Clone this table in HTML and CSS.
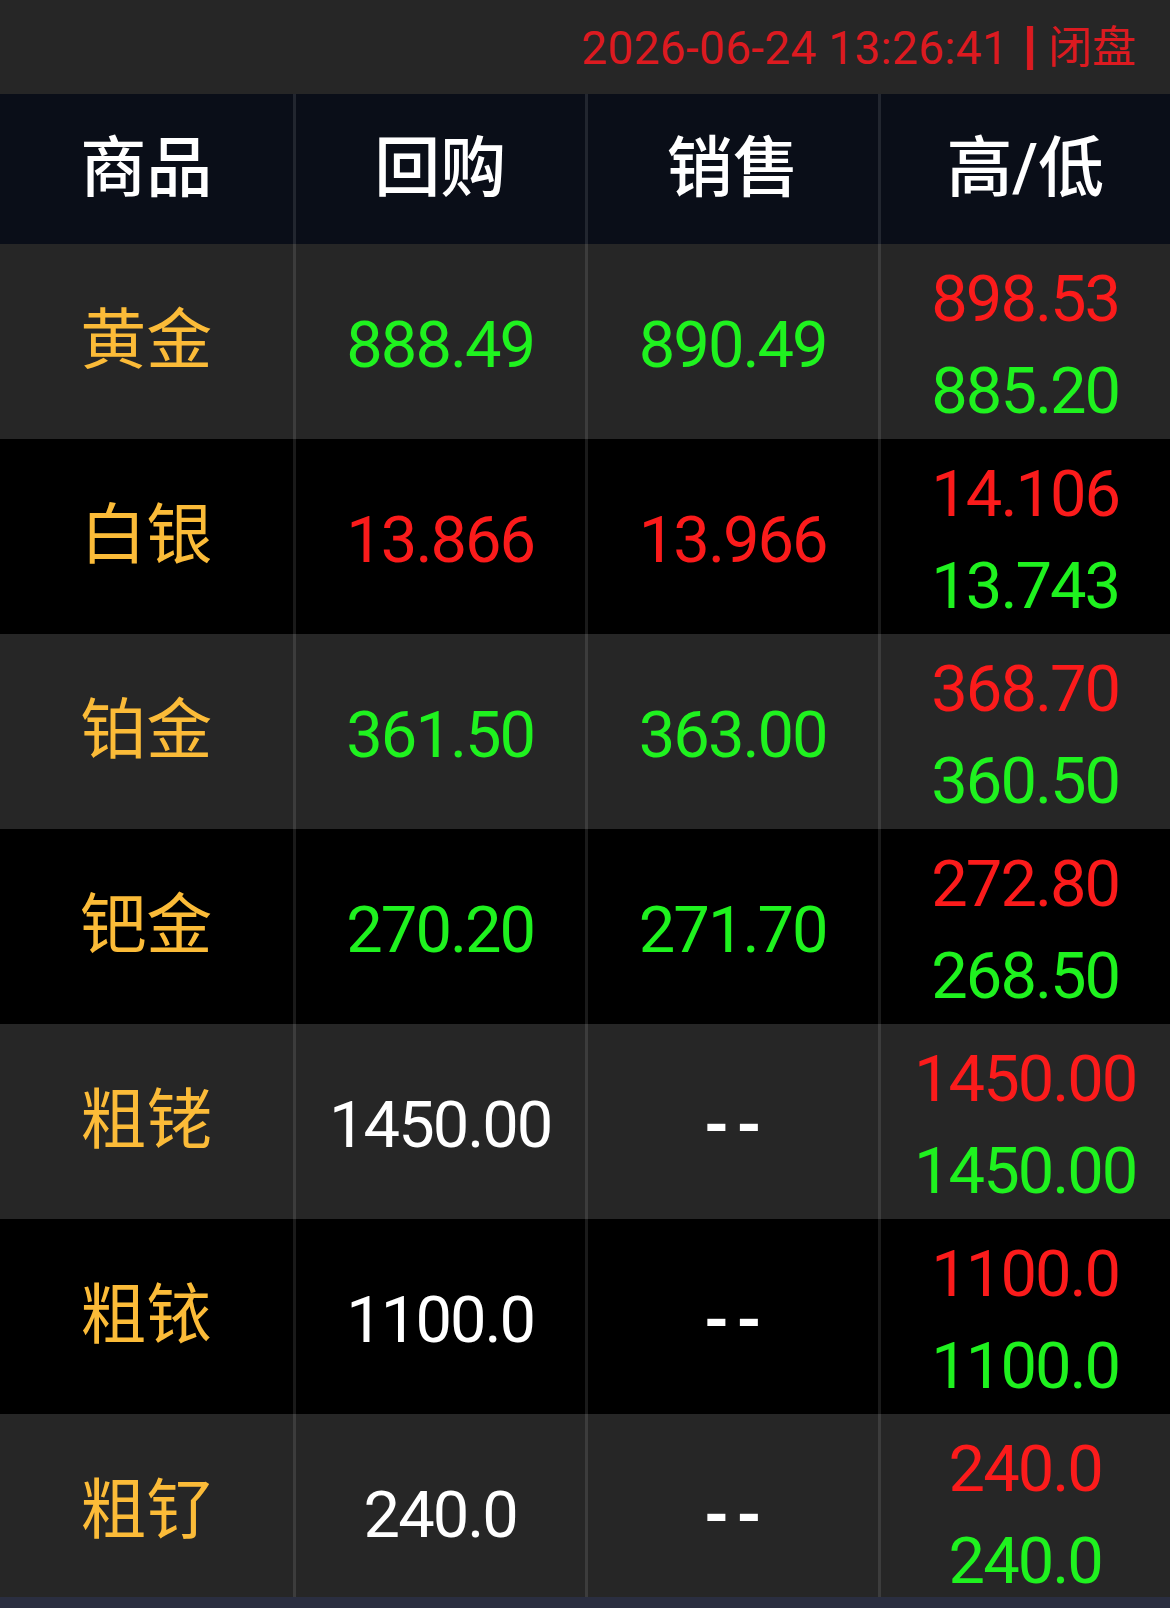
FILE: index.html
```html
<!DOCTYPE html>
<html lang="zh-CN">
<head>
	<meta charset="UTF-8">
	<title>行情报价</title>
	<link rel="stylesheet" href="styles.css">
</head>
<body>
	<div class="status-bar">
		<span class="status-time">2026-06-24 13:26:41</span>
		<span class="status-sep">|</span>
		<span class="status-state">闭盘</span>
	</div>

	<div class="quote-table">
		<div class="quote-row head">
			<div class="cell">商品</div>
			<div class="cell">回购</div>
			<div class="cell">销售</div>
			<div class="cell">高/低</div>
		</div>

		<div class="quote-row">
			<div class="cell name">黄金</div>
			<div class="cell num up">888.49</div>
			<div class="cell num up">890.49</div>
			<div class="cell num range"><span class="down">898.53</span><span class="up">885.20</span></div>
		</div>

		<div class="quote-row">
			<div class="cell name">白银</div>
			<div class="cell num down">13.866</div>
			<div class="cell num down">13.966</div>
			<div class="cell num range"><span class="down">14.106</span><span class="up">13.743</span></div>
		</div>

		<div class="quote-row">
			<div class="cell name">铂金</div>
			<div class="cell num up">361.50</div>
			<div class="cell num up">363.00</div>
			<div class="cell num range"><span class="down">368.70</span><span class="up">360.50</span></div>
		</div>

		<div class="quote-row">
			<div class="cell name">钯金</div>
			<div class="cell num up">270.20</div>
			<div class="cell num up">271.70</div>
			<div class="cell num range"><span class="down">272.80</span><span class="up">268.50</span></div>
		</div>

		<div class="quote-row">
			<div class="cell name">粗铑</div>
			<div class="cell num">1450.00</div>
			<div class="cell num empty">--</div>
			<div class="cell num range"><span class="down">1450.00</span><span class="up">1450.00</span></div>
		</div>

		<div class="quote-row">
			<div class="cell name">粗铱</div>
			<div class="cell num">1100.0</div>
			<div class="cell num empty">--</div>
			<div class="cell num range"><span class="down">1100.0</span><span class="up">1100.0</span></div>
		</div>

		<div class="quote-row">
			<div class="cell name">粗钌</div>
			<div class="cell num">240.0</div>
			<div class="cell num empty">--</div>
			<div class="cell num range"><span class="down">240.0</span><span class="up">240.0</span></div>
		</div>
	</div>

	<div class="bottom-strip"></div>
</body>
</html>
```

FILE: styles.css
```css
body {
	margin: 0;
	background-color: black;
	font-family: Roboto, "Noto Sans CJK SC", sans-serif;
	color: white;
	overflow: hidden;
}

.status-bar {
	height: 94px;
	background-color: #262626;
	display: flex;
	align-items: center;
	justify-content: flex-end;
	padding-right: 34px;
	color: #dc1a20;
	font-size: 46px;
	line-height: 1;
	box-sizing: border-box;
	padding-top: 2px;
}

.status-time {
	letter-spacing: 0.3px;
}

.status-sep {
	display: inline-block;
	font-family: "Liberation Sans", sans-serif;
	font-weight: 700;
	font-size: 46px;
	margin: 0 12px 0 15px;
	transform: translateY(-4px);
}

.status-state {
	font-size: 44px;
}

.quote-row {
	display: grid;
	grid-template-columns: repeat(4, 1fr);
	height: 195px;
}

.quote-row:nth-child(even) {
	background-color: #262626;
}

.quote-row.head {
	height: 150px;
	background-color: #0a0e18;
	font-size: 66px;
	font-weight: 500;
}

.cell {
	display: flex;
	flex-direction: column;
	align-items: center;
	justify-content: center;
	line-height: 1;
}

.cell + .cell {
	border-left: 3px solid rgba(255, 255, 255, 0.1);
}

.name {
	color: #fbbb38;
	font-size: 66px;
	padding-bottom: 2px;
}

.num {
	font-size: 65px;
	letter-spacing: -2px;
	padding-top: 7px;
}

.num.empty {
	font-weight: 700;
	letter-spacing: 7px;
	text-indent: 7px;
}

.range {
	gap: 27px;
}

.up {
	color: #1ff21f;
}

.down {
	color: #fb1b1b;
}

/* bar at the very bottom, over the last row */
.bottom-strip {
	position: fixed;
	left: 0;
	right: 0;
	bottom: 0;
	height: 11px;
	background-color: #2a2e40;
}
```
